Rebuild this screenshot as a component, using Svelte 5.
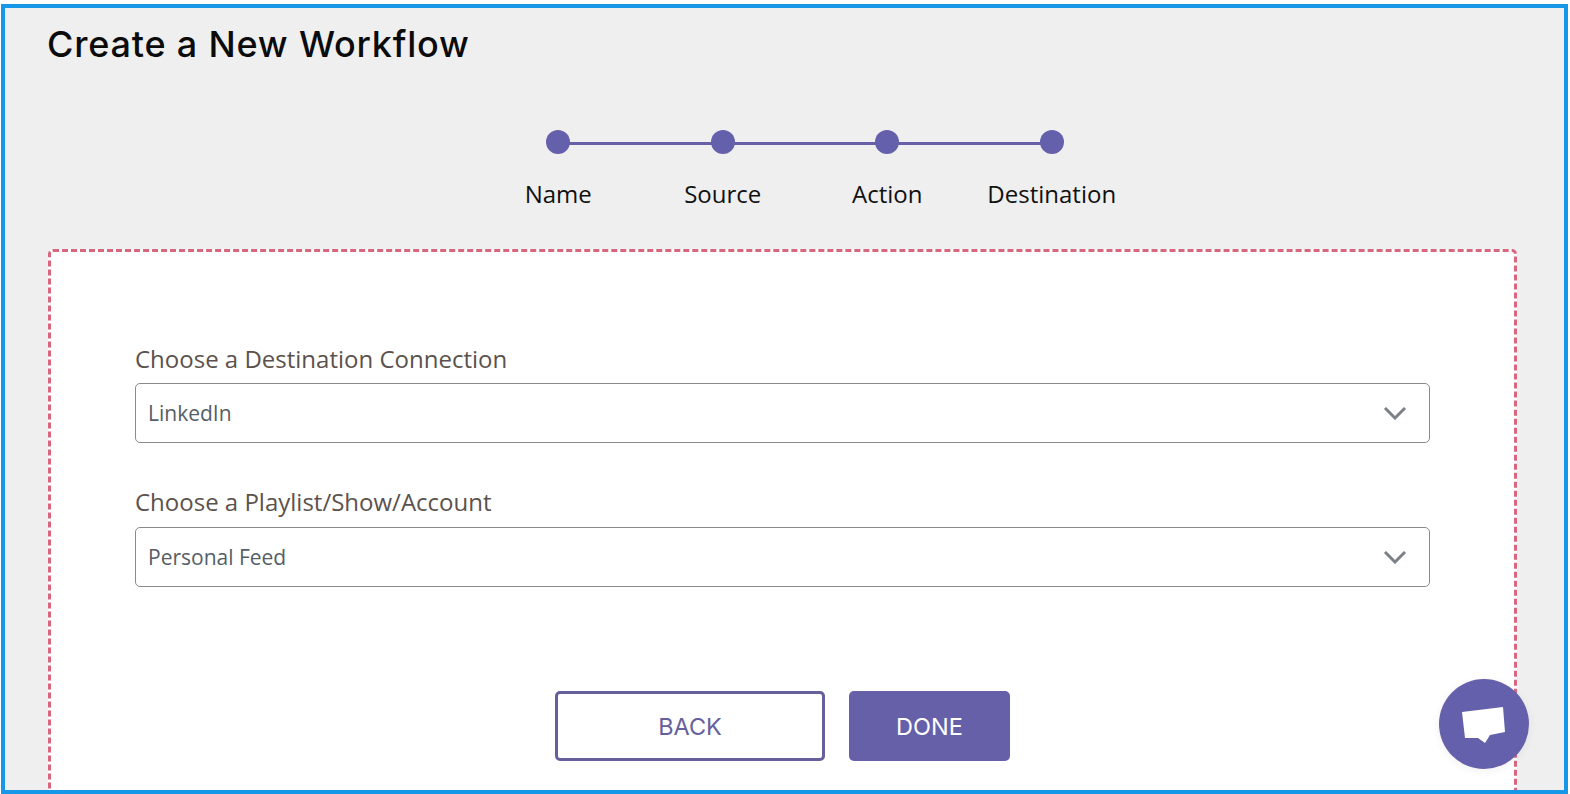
<script>
    let steps = ['Name', 'Source', 'Action', 'Destination'];
    let fields = [
        { label: 'Choose a Destination Connection', value: 'LinkedIn' },
        { label: 'Choose a Playlist/Show/Account', value: 'Personal Feed' }
    ];
</script>

<div class="frame">
    <h1>Create a New Workflow</h1>

    <div class="stepper">
        {#each steps as step, i}
            <div class="step" class:first={i === 0} class:last={i === steps.length - 1}>
                <span class="dot"></span>
                <span class="step-label">{step}</span>
            </div>
        {/each}
    </div>

    <div class="card">
        {#each fields as field}
            <div class="field">
                <div class="field-label">{field.label}</div>
                <div class="select">
                    <span>{field.value}</span>
                    <svg width="24" height="14" viewBox="0 0 24 14" fill="none" stroke="#7b8186" stroke-width="3">
                        <path d="M2 2 L12 12 L22 2" />
                    </svg>
                </div>
            </div>
        {/each}
        <div class="buttons">
            <button class="back">BACK</button>
            <button class="done">DONE</button>
        </div>
    </div>

    <div class="chat">
        <svg width="44" height="37" viewBox="0 0 44 37">
            <path d="M0 5 L41 0 L43 25 L28 28 L23 36 L16 31 L3 31 Z" fill="#fff" />
        </svg>
    </div>
</div>

<style>
    :global(body) {
        background: #fff;
        overflow: hidden;
    }
    .frame {
        position: relative;
        box-sizing: border-box;
        margin: 4px 2px 0 1px;
        height: 790px;
        border: 4px solid #1797e8;
        background: #efefef;
        overflow: hidden;
        padding: 0 47px 0 43px;
        font-family: "Open Sans", sans-serif;
    }
    h1 {
        margin: 0 0 0 -1px;
        padding-top: 12px;
        height: 70px;
        box-sizing: border-box;
        font-family: Inter, sans-serif;
        font-size: 36px;
        line-height: 48px;
        font-weight: 500;
        letter-spacing: 0.8px;
        color: #0b0b0b;
    }
    .stepper {
        display: grid;
        grid-template-columns: repeat(4, 164.5px);
        justify-content: center;
        margin: 52px 0 0 45px;
        height: 119px;
    }
    .step {
        position: relative;
        display: flex;
        flex-direction: column;
        align-items: center;
    }
    .step::before {
        content: '';
        position: absolute;
        top: 12px;
        left: 0;
        right: 0;
        height: 3px;
        background: #6560a8;
    }
    .step.first::before {
        left: 50%;
    }
    .step.last::before {
        right: 50%;
    }
    .dot {
        position: relative;
        width: 24px;
        height: 24px;
        border-radius: 50%;
        background: #6560ab;
    }
    .step-label {
        margin-top: 25px;
        font-size: 24px;
        line-height: 30px;
        color: #111;
        white-space: nowrap;
    }
    .card {
        box-sizing: border-box;
        height: 700px;
        padding: 92px 84px 0 84px;
        border: 3px dashed #d9667f;
        border-radius: 5px;
        background: #fff;
    }
    .field {
        margin-bottom: 44px;
    }
    .field-label {
        font-size: 24px;
        line-height: 30px;
        color: #5c524d;
        margin-bottom: 9px;
    }
    .field + .field .field-label {
        margin-bottom: 10px;
    }
    .select {
        box-sizing: border-box;
        height: 60px;
        padding: 0 22px 0 12px;
        display: flex;
        align-items: center;
        justify-content: space-between;
        border: 1px solid #8a8a8a;
        border-radius: 5px;
        font-size: 21px;
        color: #555e66;
    }
    .buttons {
        display: flex;
        justify-content: center;
        gap: 24px;
        margin-top: 104px;
    }
    button {
        box-sizing: border-box;
        height: 70px;
        border-radius: 5px;
        font-family: Inter, sans-serif;
        font-size: 23.5px;
        font-weight: 400;
    }
    .back {
        width: 270px;
        border: 3px solid #65609c;
        background: #fff;
        color: #65609c;
    }
    .done {
        width: 161px;
        border: none;
        background: #6560a8;
        color: #fff;
    }
    .chat {
        position: absolute;
        right: 35px;
        top: 671px;
        width: 90px;
        height: 90px;
        border-radius: 50%;
        background: #6560ab;
        display: flex;
        align-items: center;
        justify-content: center;
        box-shadow: 0 2px 10px rgba(0, 0, 0, 0.06);
    }
    .chat svg {
        margin-top: 3px;
    }
</style>
